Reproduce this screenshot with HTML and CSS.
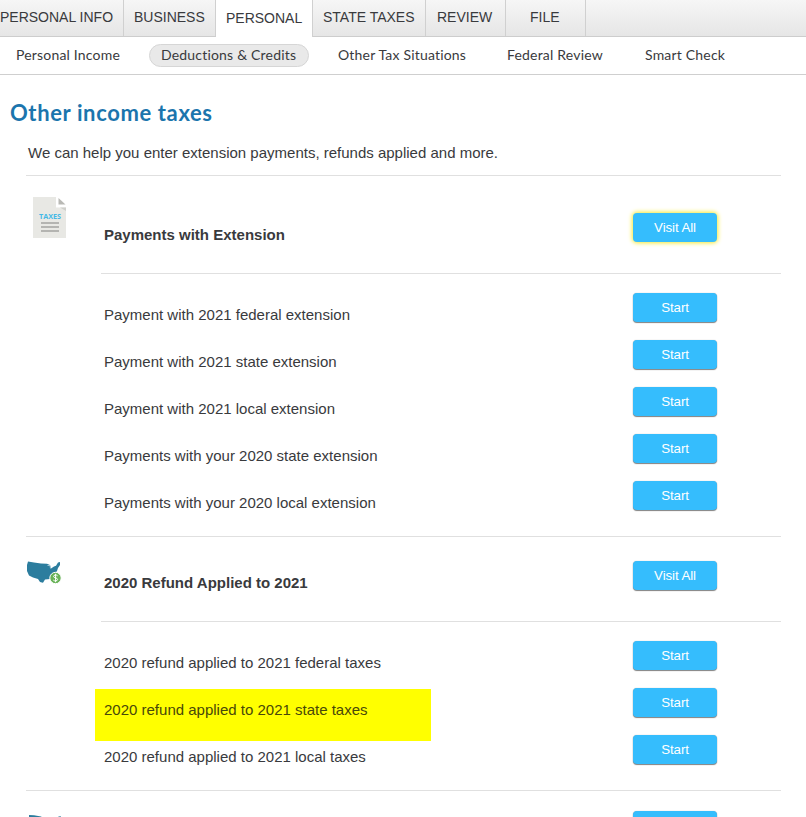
FILE: index.html
```html
<!DOCTYPE html>
<html lang="en">
<head>
<meta charset="utf-8">
<title>Other income taxes</title>
<link rel="stylesheet" href="styles.css">
</head>
<body>
<nav class="tabs">
  <a class="tab tab-info"><span>PERSONAL INFO</span></a>
  <a class="tab tab-business"><span>BUSINESS</span></a>
  <a class="tab tab-personal active"><span>PERSONAL</span></a>
  <a class="tab tab-state"><span>STATE TAXES</span></a>
  <a class="tab tab-review"><span>REVIEW</span></a>
  <a class="tab tab-file"><span>FILE</span></a>
</nav>
<nav class="subnav">
  <a class="sub-income"><span>Personal Income</span></a>
  <a class="sub-deductions selected"><span>Deductions &amp; Credits</span></a>
  <a class="sub-other"><span>Other Tax Situations</span></a>
  <a class="sub-review"><span>Federal Review</span></a>
  <a class="sub-check"><span>Smart Check</span></a>
</nav>
<main>
  <h1><span>Other income taxes</span></h1>
  <p class="intro"><span>We can help you enter extension payments, refunds applied and more.</span></p>

  <section class="group first">
    <div class="icon">
      <svg class="doc" width="34" height="42" viewBox="0 0 34 42">
        <path d="M0 0H23V10.500H33V41H0Z" fill="#e8e8e4"/>
        <path d="M25.500 1V7.500H32.500Z" fill="#b9b9b5"/>
        <path d="M27 10.500H33V14Z" fill="#cfcfcb"/>
        <text x="6" y="21.500" textLength="22" lengthAdjust="spacingAndGlyphs">TAXES</text>
        <path d="M8 26H26M8 30H26M8 34H26" stroke="#b4b4b1" stroke-width="1.800"/>
      </svg>
    </div>
    <div class="body">
      <header class="head"><h2>Payments with Extension</h2><button class="btn focused">Visit All</button></header>
      <div class="rows">
        <div class="row"><span class="label">Payment with 2021 federal extension</span><button class="btn">Start</button></div>
        <div class="row"><span class="label">Payment with 2021 state extension</span><button class="btn">Start</button></div>
        <div class="row"><span class="label">Payment with 2021 local extension</span><button class="btn">Start</button></div>
        <div class="row"><span class="label">Payments with your 2020 state extension</span><button class="btn">Start</button></div>
        <div class="row"><span class="label">Payments with your 2020 local extension</span><button class="btn">Start</button></div>
      </div>
    </div>
  </section>

  <section class="group">
    <div class="icon">
      <svg class="map" width="36" height="24" viewBox="0 0 36 24">
        <path d="M1 .5 7 1.500 14 2.500 20 2.800 23 4 24 7.500 27 5.500 29 4.800 31 1.500 33 1 33 4 31 7 30 10 27 13.500 26 16 27 20 25 19 23 18 18 18.500 16 21.800 13 21 11 18 6 16.500 2 14.500 0 10 0 4Z" fill="#2c7d9e"/>
        <path d="M20.500 4.500 23 4.500 23.500 7.500" fill="none" stroke="#b4d3df" stroke-width=".8"/>
        <circle cx="28.500" cy="17" r="5.700" fill="#68b257" stroke="#fff"/>
        <path d="M30.600 14.800C29.600 13.600 26.600 13.700 26.600 15.500S30.600 16.500 30.600 18.400 27.300 20.300 26.300 19.100M28.600 12.800V21.200" fill="none" stroke="#fff" stroke-width="1"/>
      </svg>
    </div>
    <div class="body">
      <header class="head"><h2>2020 Refund Applied to 2021</h2><button class="btn">Visit All</button></header>
      <div class="rows">
        <div class="row"><span class="label">2020 refund applied to 2021 federal taxes</span><button class="btn">Start</button></div>
        <div class="row"><span class="label marked">2020 refund applied to 2021 state taxes</span><button class="btn">Start</button></div>
        <div class="row"><span class="label">2020 refund applied to 2021 local taxes</span><button class="btn">Start</button></div>
      </div>
    </div>
  </section>

  <section class="group last">
    <div class="icon">
      <svg class="map" width="36" height="3" viewBox="0 0 36 3">
        <path d="M2 0 7 .3 14 1.500 16 3H2Z" fill="#2c7d9e"/>
        <path d="M32 1H34V2H31Z" fill="#7fb0c4"/>
      </svg>
    </div>
    <div class="body">
      <header class="head"><button class="btn"></button></header>
    </div>
  </section>
</main>
</body>
</html>
```

FILE: styles.css
```css
* { box-sizing: border-box; }

html, body {
  margin: 0;
  height: 817px;
  overflow: hidden;
}

body {
  display: flex;
  flex-direction: column;
  background: #fff;
  color: #393a3d;
  font: 15px/18px "Liberation Sans", Arial, sans-serif;
}

.tabs {
  display: flex;
  flex: none;
  height: 37px;
  background: linear-gradient(#f6f6f6, #ececec 60%, #e6e6e6);
  border-bottom: 1px solid #cdcdcd;
  font-size: 14px;
  white-space: nowrap;
}

.tab {
  height: 36px;
  padding-top: 8px;
  border-right: 1px solid #d0d0d0;
}

.tab-info { width: 124px; }
.tab-business { width: 92px; padding-left: 10px; }
.tab-personal { width: 97px; padding-left: 10px; }
.tab-state { width: 113px; padding-left: 10px; }
.tab-review { width: 80px; padding-left: 11px; }
.tab-file { width: 80px; padding-left: 24px; }

.tab.active {
  height: 37px;
  padding-top: 9px;
  background: #fff;
}

.subnav {
  display: flex;
  flex: none;
  align-items: flex-start;
  height: 38px;
  padding: 7px 0 0 16px;
  border-bottom: 1px solid #cfcfcf;
  font: 14px/22px Lato, sans-serif;
  letter-spacing: .19px;
  white-space: nowrap;
}

.subnav a { flex: none; }
.sub-income { width: 133px; }
.sub-deductions { width: 160px; margin-right: 29px; padding-left: 11px; }
.sub-other { width: 169px; }
.sub-review { width: 138px; }

.selected {
  height: 23px;
  border: 1px solid #d6d6d6;
  border-radius: 12px;
  background: #e9e9e9;
  line-height: 20px;
}

main {
  flex: 1;
  min-height: 0;
  padding: 24px 25px 0 26px;
  overflow: hidden;
}

h1 {
  margin: 0 0 0 -16px;
  color: #1b75ad;
  font: bold 22px/27px Lato, sans-serif;
  letter-spacing: .62px;
}

.intro {
  margin: 18px 0 13px 2px;
}

.group {
  display: flex;
  border-top: 1px solid #e0e0e0;
  padding-bottom: 8px;
}

.icon { flex: none; width: 75px; }
.icon svg { display: block; }
.doc { margin: 21px 0 0 7px; }
.doc text { fill: #45b9e6; font: bold 7px "Open Sans", sans-serif; }
.map { margin: 24px 0 0 1px; }
.body { flex: 1; }

.head, .row {
  display: flex;
  justify-content: space-between;
  align-items: flex-start;
}

.head {
  height: 85px;
  padding: 24px 64px 0 3px;
  border-bottom: 1px solid #e0e0e0;
}

.first .head { height: 98px; padding-top: 37px; }

.last { padding-bottom: 0; }
.last .head { height: 26px; padding-top: 20px; border: 0; justify-content: flex-end; overflow: hidden; }

h2 {
  margin: 13px 0 0;
  font-size: 15px;
  line-height: 18px;
}

.rows { padding: 19px 64px 0 3px; }
.row { height: 47px; }
.label { margin-top: 13px; }

.marked {
  width: 336px;
  height: 52px;
  margin: 1px 0 0 -9px;
  padding: 12px 0 0 9px;
  background: #ff0;
  color: #48480a;
}

.btn {
  width: 84px;
  height: 29px;
  padding: 0;
  border: 0;
  border-radius: 4px;
  background: #35bdfd;
  box-shadow: 0 1px 1px #808080, 0 0 1px #aaa;
  color: #fff;
  font: 13.33px/28px "Liberation Sans", Arial, sans-serif;
  letter-spacing: -.1px;
}

.btn.focused { box-shadow: 0 0 4px 1px #f5e932; }
```
